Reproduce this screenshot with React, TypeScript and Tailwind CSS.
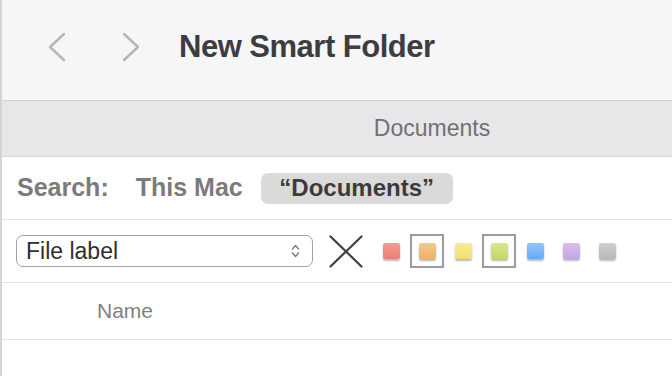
import React from "react"

const font = { fontFamily: '"Liberation Sans", Arial, sans-serif' }

const labels = [
  { color: "from-[#f49b91] to-[#ea7f74]", framed: false },
  { color: "from-[#f6c88a] to-[#eeb165]", framed: true },
  { color: "from-[#f8ec92] to-[#f0de6c]", framed: false },
  { color: "from-[#d6e78c] to-[#c3d962]", framed: true },
  { color: "from-[#93c5fb] to-[#69a9f6]", framed: false },
  { color: "from-[#dcbdf0] to-[#c7a2e4]", framed: false },
  { color: "from-[#d0d0d0] to-[#b8b8b8]", framed: false },
]

function Chevron({ dir }: { dir: "left" | "right" }) {
  return (
    <svg width="18" height="30" viewBox="0 0 18 30" fill="none">
      <polyline
        points={dir === "left" ? "16,2 2,15 16,28" : "2,2 16,15 2,28"}
        stroke="#b5b5b7"
        strokeWidth="2.4"
        strokeLinecap="round"
        strokeLinejoin="round"
      />
    </svg>
  )
}

export default function App() {
  return (
    <div className="w-[672px] h-[376px] overflow-hidden bg-white border-l-2 border-[#d4d4d6] flex flex-col" style={font}>
      {/* toolbar */}
      <div className="h-[101px] shrink-0 bg-[#f6f6f8] border-b border-[#d2d2d4] shadow-[0_1px_1px_rgba(0,0,0,0.06)] flex items-center">
        <div className="ml-[46px] mt-[-6px]">
          <Chevron dir="left" />
        </div>
        <div className="ml-[56px] mt-[-6px]">
          <Chevron dir="right" />
        </div>
        <span className="ml-[39px] mt-[-6px] text-[31px] font-bold tracking-[-0.5px] text-[#3d3d3f]">New Smart Folder</span>
      </div>

      {/* tab bar */}
      <div className="h-[56px] shrink-0 bg-[#e7e7e9] border-b border-[#d8d8da] flex items-center justify-center">
        <span className="ml-[190px] text-[23px] text-[#707072]">Documents</span>
      </div>

      {/* search scope */}
      <div className="h-[63px] shrink-0 border-b border-[#e3e3e3] flex items-center pl-[15px]">
        <span className="text-[25px] font-bold text-[#7b7b7b]">Search:</span>
        <span className="ml-[27px] text-[25px] font-bold text-[#7b7b7b]">This Mac</span>
        <span className="ml-[18px] h-[31px] w-[192px] rounded-[7px] bg-[#dadada] flex items-center justify-center text-[24px] font-bold text-[#3b3b3b]">
          “Documents”
        </span>
      </div>

      {/* criteria */}
      <div className="h-[63px] shrink-0 border-b border-[#e3e3e3] flex items-center pl-[14px]">
        <div className="w-[297px] h-[32px] rounded-[7px] border-[1.5px] border-[#a2a2a2] bg-white flex items-center pl-[9px] pr-[12px]">
          <span className="flex-1 text-[23px] text-[#2f2f2f]">File label</span>
          <svg width="9" height="16" viewBox="0 0 9 16" fill="none">
            <polyline points="1.5,6 4.5,2.5 7.5,6" stroke="#7a7a7a" strokeWidth="1.4" strokeLinecap="round" strokeLinejoin="round" />
            <polyline points="1.5,10 4.5,13.5 7.5,10" stroke="#7a7a7a" strokeWidth="1.4" strokeLinecap="round" strokeLinejoin="round" />
          </svg>
        </div>
        <svg className="ml-[16px]" width="34" height="33" viewBox="0 0 34 33" fill="none">
          <line x1="1.5" y1="1.5" x2="32.5" y2="31.5" stroke="#404040" strokeWidth="2.2" strokeLinecap="round" />
          <line x1="32.5" y1="1.5" x2="1.5" y2="31.5" stroke="#404040" strokeWidth="2.2" strokeLinecap="round" />
        </svg>
        <div className="ml-[10px] flex items-center">
          {labels.map((l, i) => (
            <div key={i} className="w-[36px] h-[34px] flex items-center justify-center">
              <div
                className={
                  l.framed
                    ? "w-[34px] h-[34px] border-2 border-[#9b9b9b] flex items-center justify-center"
                    : "w-[34px] h-[34px] flex items-center justify-center"
                }
              >
                <div className={`w-[17px] h-[16px] rounded-[2px] bg-gradient-to-b ${l.color} shadow-[0_2px_2px_rgba(0,0,0,0.28)]`} />
              </div>
            </div>
          ))}
        </div>
      </div>

      {/* column header */}
      <div className="h-[57px] shrink-0 border-b border-[#e3e3e3] flex items-center pl-[95px]">
        <span className="text-[21px] text-[#7f7f7f]">Name</span>
      </div>

      <div className="flex-1 bg-white" />
    </div>
  )
}
